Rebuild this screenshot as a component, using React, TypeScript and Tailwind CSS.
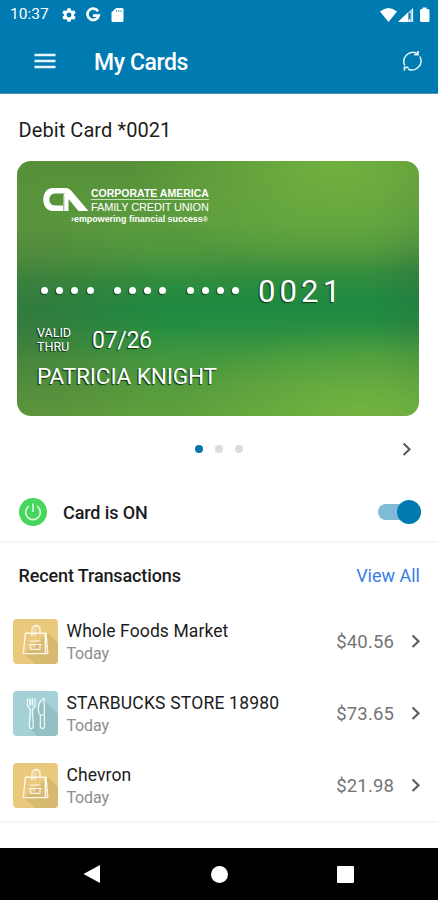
import React from "react";

const transactions = [
  { name: "Whole Foods Market", day: "Today", amount: "$40.56", kind: "bag", spacing: "tracking-[0.1px]" },
  { name: "STARBUCKS STORE 18980", day: "Today", amount: "$73.65", kind: "food", spacing: "tracking-[0.2px]" },
  { name: "Chevron", day: "Today", amount: "$21.98", kind: "bag", spacing: "tracking-[0.1px]" },
];

function Chevron() {
  return (
    <svg width="10" height="16" viewBox="0 0 10 16" fill="none" stroke="#5a5a5a" strokeWidth="2.1">
      <path d="M1.6 2.500 L7.500 8.300 L1.6 14" />
    </svg>
  );
}

function BagIcon() {
  return (
    <svg width="45" height="45" viewBox="0 0 45 45" className="rounded-[4px]">
      <rect width="45" height="45" fill="#eac87c" />
      <path d="M35 14 L45 24 V45 H22 L11 35Z" fill="#d8b970" />
      <g fill="none" stroke="#fdf7e8" strokeLinejoin="round" strokeLinecap="round">
        <path d="M12.3 14.2 H33 L34.8 34.6 H10.3Z" strokeWidth="1.4" />
        <path d="M32.2 14.5 L32.4 34" strokeWidth="1.5" />
        <path d="M19 17 V11.5 C19 4.8 27 4.8 27 11.5 V15" strokeWidth="1.3" />
        <path d="M22 17 V11 C22 8 24 6.500 26 8" strokeWidth="1" />
        <path d="M17 22 H27.5 M16 25.5 H28.5 M17.5 25.5 V30.3 H27 V25.5 M21 25.5 V28" strokeWidth="1.2" />
      </g>
    </svg>
  );
}

function FoodIcon() {
  return (
    <svg width="45" height="45" viewBox="0 0 45 45" className="rounded-[4px]">
      <rect width="45" height="45" fill="#a4d1d5" />
      <path d="M32 10 L45 23 V45 H24 L17 37 L20 20Z" fill="#94c0c4" />
      <g fill="none" stroke="#f4fbfb" strokeWidth="1.2" strokeLinejoin="round">
        <path d="M14.5 7.5 V14 C14.5 16 17 17.2 17.2 19 L16.3 35 C16.3 38.3 20.3 38.3 20.3 35 L19.4 19 C19.6 17.2 22 16 22 14 V7.5" />
        <path d="M17 7.5 V14.5 M19.5 7.5 V14.5" strokeWidth="1.6" />
        <path d="M31.2 7.5 C26 9 24.7 16.5 25.5 21.5 L27.3 24 V35.5 C27.3 38 31.5 38 31.5 35.5Z" />
        <path d="M27.5 24 H31" />
      </g>
    </svg>
  );
}

function StatusBar() {
  return (
    <div className="flex h-[29px] items-center pl-[10px] pr-[8px] text-white">
      <span className="w-[51px] pt-px text-[15.5px] leading-none tracking-[0.05px]">10:37</span>
      <svg width="16" height="16" viewBox="0 0 24 24" fill="#fff" className="mr-[7px]">
        <path d="M19.6 13.2c.1-.8.1-1.6 0-2.4l2.4-1.9-2.3-4-2.9 1.1c-.6-.5-1.3-.9-2-1.2L14.3 2H9.700l-.5 2.800c-.7.3-1.400.7-2 1.200L4.300 4.900l-2.300 4 2.400 1.900c-.1.8-.1 1.600 0 2.400L2 15.100l2.300 4 2.900-1.100c.6.5 1.300.9 2 1.200l.5 2.800h4.600l.5-2.800c.7-.3 1.400-.7 2-1.200l2.900 1.100 2.300-4zM12 15.700a3.700 3.700 0 1 1 0-7.400 3.700 3.700 0 0 1 0 7.400z" />
      </svg>
      <svg width="18" height="16" viewBox="0 0 18 16" fill="none" stroke="#fff" strokeWidth="2.7" className="mr-[9px]">
        <path d="M14 4.200 A5.700 5.700 0 1 0 14.700 8.600 H9" />
      </svg>
      <svg width="13" height="16" viewBox="0 0 13 16">
        <path d="M5 1 H11 Q12.500 1 12.500 2.500 V13.500 Q12.500 15 11 15 H2 Q.5 15 .5 13.500 V5.500Z" fill="#fff" />
        <path d="M5.500 3 V5 M7.800 3 V5 M10 3 V5" stroke="#4ba2ca" strokeWidth="1" />
      </svg>
      <svg width="50" height="16" viewBox="0 0 50 16" className="ml-auto">
        <path d="M0 4.500 Q8.500 -2.500 17 4.500 L8.500 15Z" fill="#fff" />
        <path d="M18 15 L33 .7 V15Z" fill="#9bcbe2" />
        <path d="M18 15 L28 5.500 V15Z" fill="#fff" />
        <path d="M29.500 6 V12" stroke="#007bb2" strokeWidth="1.700" />
        <path d="M29.500 13 V15 M32.500 2 V15" stroke="#fff" strokeWidth="1.200" />
        <path d="M42.500 .5 H46.500 V2 H48 Q49.500 2 49.500 3.500 V13.500 Q49.500 15 48 15 H41.500 Q40 15 40 13.500 V3.500 Q40 2 41.500 2 H42.500Z" fill="#fff" />
      </svg>
    </div>
  );
}

function CardLogo() {
  return (
    <div className="w-[172px] whitespace-nowrap font-['Liberation_Sans',Arial,sans-serif]">
      <div className="flex h-[26px]">
        <svg width="46" height="25" viewBox="0 0 46 25" className="mr-[2px] shrink-0">
          <path d="M10 1 H23 Q26 1 28 3.500 L45.500 24 H35.500 L25.500 12 V24 H10 C-3 24 -3 1 10 1Z M12 6.500 C4.500 6.500 4.500 18.500 12 18.500 H20 V12 C20 8 21 6.500 23 6.500Z" fill="#fff" fillRule="evenodd" />
          <path d="M20.800 9 V24" stroke="#579c3c" strokeWidth=".8" />
        </svg>
        <div className="flex w-[118px] flex-col">
          <span className="h-[13px] border-b border-[#c5dfba] text-[10.500px] font-bold leading-[13px]">CORPORATE AMERICA</span>
          <span className="h-[13px] text-[11px] leading-[14px] tracking-[-0.14px]">FAMILY CREDIT UNION</span>
        </div>
      </div>
      <div className="pl-[28px] text-[8.900px] font-bold leading-[13px] tracking-[0.02px]">›empowering financial success<span className="text-[7px]">®</span></div>
    </div>
  );
}

function DebitCard() {
  return (
    <div className="ml-[17px] mr-[19px] flex h-[255px] shrink-0 flex-col overflow-hidden rounded-[14px] bg-[radial-gradient(ellipse_210px_105px_at_80%_2%,rgba(124,190,66,0.7),transparent),radial-gradient(ellipse_190px_80px_at_86%_98%,rgba(124,190,66,0.65),transparent),radial-gradient(ellipse_150px_150px_at_0%_65%,rgba(82,96,58,0.4),transparent),radial-gradient(ellipse_50px_140px_at_100%_50%,rgba(50,90,62,0.22),transparent),linear-gradient(179deg,#568f38_0%,#5a9b3d_25%,#4f963d_36%,#318d3e_46%,#1f8a41_56%,#238d41_63%,#43983e_76%,#579b3d_88%,#60a03c_100%)] text-white">
      <div className="pl-[26px] pt-[26px]">
        <CardLogo />
      </div>
      <div className="mt-[44px] flex h-[40px] items-center pl-[24px]">
        <div className="flex gap-[20.200px]">
          {[0, 1, 2].map((group) => (
            <div key={group} className="flex gap-[8.200px]">
              {[0, 1, 2, 3].map((dot) => (
                <span key={dot} className="size-[7px] rounded-full bg-white shadow-[-1px_1px_1px_rgba(0,40,0,0.6)]" />
              ))}
            </div>
          ))}
        </div>
        <span className="ml-[19px] pt-[2px] text-[31px] leading-none tracking-[4.100px] [text-shadow:-1px_1px_1px_rgba(0,30,0,0.75)]">0021</span>
      </div>
      <div className="mt-[12px] flex h-[36px] items-center pl-[20px] [text-shadow:-1px_1px_1px_rgba(0,30,0,0.85)]">
        <div className="w-[55px] text-[12.500px] leading-[14px]">
          VALID
          <br />
          THRU
        </div>
        <span className="text-[23px] leading-none tracking-[-0.300px]">07/26</span>
      </div>
      <div className="mt-[5px] pl-[20px] text-[22.500px] leading-[26px] tracking-[-0.1px] [text-shadow:-1px_1px_1px_rgba(0,30,0,0.85)]">PATRICIA KNIGHT</div>
    </div>
  );
}

export default function App() {
  return (
    <div className="flex h-[900px] w-[438px] flex-col overflow-hidden bg-white font-['Roboto',sans-serif] text-[#1c1c1c]">
      <header className="h-[94px] shrink-0 border-b border-[#4b93bf] bg-[#007bb2]">
        <StatusBar />
        <div className="flex h-[64px] items-center pl-[34px] pr-[15px] text-white">
          <svg width="22" height="16" viewBox="0 0 22 16" stroke="#e9f5fb" strokeWidth="2.400">
            <path d="M.5 2 H21.500 M.5 8 H21.500 M.5 14 H21.500" />
          </svg>
          <h1 className="ml-[38px] pt-[2px] text-[23px] font-medium leading-none tracking-[-0.400px]">My Cards</h1>
          <svg width="22" height="22" viewBox="0 0 22 22" className="ml-auto" fill="none" stroke="#e2f1f8" strokeWidth="1.500">
            <path d="M3.800 15.500 A9 9 0 0 1 16 3.500 M18.800 6.500 A9 9 0 0 1 7 19" />
            <path d="M17 1 V4.700 H13 M3.500 20.500 V17.300 H7.500" strokeWidth="1.800" />
          </svg>
        </div>
      </header>

      <h2 className="flex h-[67px] shrink-0 items-center pl-[18.500px] pt-[4px] text-[20px] tracking-[0.080px]">Debit Card *0021</h2>
      <DebitCard />

      <div className="flex h-[66px] shrink-0 items-center pl-[195px] pr-[26px]">
        <div className="flex gap-[12px]">
          <span className="size-2 rounded-full bg-[#0876ae]" />
          <span className="size-2 rounded-full bg-[#dcdcdc]" />
          <span className="size-2 rounded-full bg-[#dcdcdc]" />
        </div>
        <div className="ml-auto"><Chevron /></div>
      </div>

      <div className="flex h-[61px] shrink-0 items-center border-b-2 border-[#f5f5f5] pl-[19px] pr-[17px]">
        <svg width="28" height="28" viewBox="0 0 28 28">
          <circle cx="14" cy="14" r="14" fill="#45d65b" />
          <path d="M10 8.200 A7.300 7.300 0 1 0 18 8.200 M14 5.500 V14" fill="none" stroke="#d9f8dd" strokeWidth="1.600" />
        </svg>
        <span className="ml-[16px] pt-px text-[18px] font-medium tracking-[-0.100px]">Card is ON</span>
        <div className="ml-auto flex h-4 w-[43px] items-center justify-end rounded-full bg-[#7fbbd7]">
          <span className="size-6 shrink-0 rounded-full bg-[#007ab1]" />
        </div>
      </div>

      <div className="flex h-[62px] shrink-0 items-center justify-between pl-[18.500px] pr-[18px] pt-[2px]">
        <h3 className="text-[18px] font-medium tracking-[-0.120px]">Recent Transactions</h3>
        <span className="text-[18px] text-[#397de9]">View All</span>
      </div>

      <div className="shrink-0 border-b-2 border-[#f5f5f5]">
        {transactions.map((t) => (
          <div key={t.name} className="flex h-[72px] items-center pl-[12.500px] pr-[17px]">
            {t.kind === "bag" ? <BagIcon /> : <FoodIcon />}
            <div className="ml-[9px] flex flex-col pt-[2px]">
              <span className={`text-[17.500px] leading-[23px] ${t.spacing}`}>{t.name}</span>
              <span className="text-[16px] leading-[22px] tracking-[-0.150px] text-[#8d8d8d]">{t.day}</span>
            </div>
            <span className="ml-auto mr-[17px] pt-[3px] text-[18.500px] tracking-[0.15px] text-[#757575]">{t.amount}</span>
            <Chevron />
          </div>
        ))}
      </div>

      <nav className="mt-auto flex h-[52px] shrink-0 items-center justify-between bg-black pl-[83px] pr-[84px]">
        <svg width="18" height="20" viewBox="0 0 18 20"><path d="M.5 10 L17 1 V19Z" fill="#fff" /></svg>
        <span className="size-[17px] rounded-full bg-white" />
        <span className="size-[17px] rounded-[1px] bg-white" />
      </nav>
    </div>
  );
}
